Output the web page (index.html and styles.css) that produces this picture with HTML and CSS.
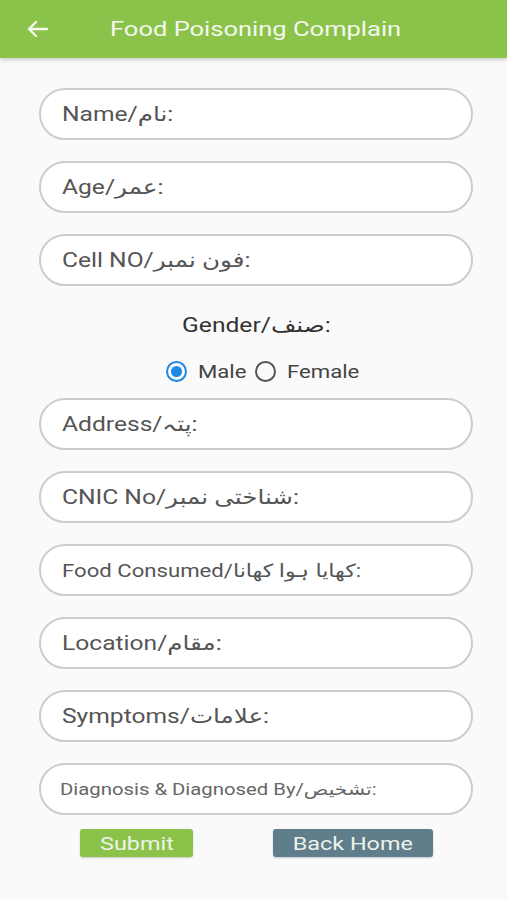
FILE: index.html
```html
<!DOCTYPE html>
<html>
<head>
<meta charset="utf-8">
<link rel="stylesheet" href="styles.css">
</head>
<body>
<header class="appbar">
  <svg class="back" width="22" height="18" viewBox="0 0 22 18"><path d="M21 9H3M10 2L3 9l7 7" fill="none" stroke="#f4f8ee" stroke-width="2.4" stroke-linecap="round" stroke-linejoin="round"/></svg>
  <h1 class="title"><span class="wide">Food Poisoning Complain</span></h1>
</header>
<main class="form">
  <div class="field"><span class="wide">Name/نام:</span></div>
  <div class="field"><span class="wide">Age/عمر:</span></div>
  <div class="field"><span class="wide">Cell NO/فون نمبر:</span></div>
  <div class="gender"><span class="wide mid">Gender/صنف:</span></div>
  <div class="radios">
    <span class="radio on"></span><span class="rlabel wide">Male</span>
    <span class="radio"></span><span class="rlabel wide">Female</span>
  </div>
  <div class="field"><span class="wide">Address/پتہ:</span></div>
  <div class="field"><span class="wide">CNIC No/شناختی نمبر:</span></div>
  <div class="field medium"><span class="wide">Food Consumed/کھایا ہوا کھانا:</span></div>
  <div class="field"><span class="wide">Location/مقام:</span></div>
  <div class="field"><span class="wide">Symptoms/علامات:</span></div>
  <div class="field small"><span class="wide">Diagnosis &amp; Diagnosed By/تشخیص:</span></div>
  <div class="buttons">
    <span class="btn submit"><span class="wide mid">Submit</span></span>
    <span class="btn home"><span class="wide mid">Back Home</span></span>
  </div>
</main>
</body>
</html>
```
FILE: styles.css
```css
* { box-sizing: border-box; }
html, body { margin: 0; padding: 0; }
body {
  background: #fafafa;
  font-family: Roboto, "DejaVu Sans", sans-serif;
  width: 507px;
  height: 900px;
  overflow: hidden;
}
.wide {
  display: inline-block;
  transform: scaleX(1.23);
  transform-origin: left center;
  white-space: nowrap;
}
.wide.mid { transform-origin: center center; }
.appbar {
  height: 58px;
  background: #8bc34a;
  display: flex;
  align-items: center;
  padding-left: 26px;
  box-shadow: 0 2px 4px rgba(0,0,0,0.18);
}
.back { flex: none; }
.title {
  margin: 0 0 0 62px;
  font-size: 20px;
  font-weight: 400;
  color: #f4f8ee;
}
.title .wide { transform: scaleX(1.275); }
.form {
  padding: 30px 0 0 39px;
  display: flex;
  flex-direction: column;
}
.field {
  width: 434px;
  height: 52px;
  border: 2px solid #cdcdcd;
  border-radius: 26px;
  background: #ffffff;
  display: flex;
  align-items: center;
  padding-left: 21px;
  font-size: 20px;
  color: #555;
  margin-bottom: 21px;
}
.field.medium { font-size: 18px; }
.field.small { font-size: 16.5px; padding-left: 19px; color: #666; }
.gender {
  width: 434px;
  text-align: center;
  font-size: 20px;
  color: #333;
  margin-top: 5px;
  line-height: 26px;
}
.radios {
  width: 434px;
  display: flex;
  align-items: center;
  margin-top: 21px;
  margin-bottom: 15px;
  padding-left: 127px;
  height: 24px;
}
.radio {
  flex: none;
  width: 21px;
  height: 21px;
  border: 2px solid #555;
  border-radius: 50%;
  display: inline-flex;
  align-items: center;
  justify-content: center;
}
.radio.on { border-color: #1e88e5; }
.radio.on::after {
  content: "";
  width: 11px;
  height: 11px;
  border-radius: 50%;
  background: #1e88e5;
}
.rlabel {
  font-size: 18px;
  color: #444;
  margin: 0 18px 0 11px;
}
.buttons {
  display: flex;
  margin-top: -7px;
  padding-left: 41px;
  gap: 80px;
}
.btn {
  height: 28px;
  border-radius: 3px;
  display: flex;
  align-items: center;
  justify-content: center;
  font-size: 19px;
  color: #eef3ea;
  box-shadow: 0 1px 2px rgba(0,0,0,0.2);
}
.submit { width: 113px; background: #8bc34a; }
.home { width: 160px; background: #607d8b; }
```
